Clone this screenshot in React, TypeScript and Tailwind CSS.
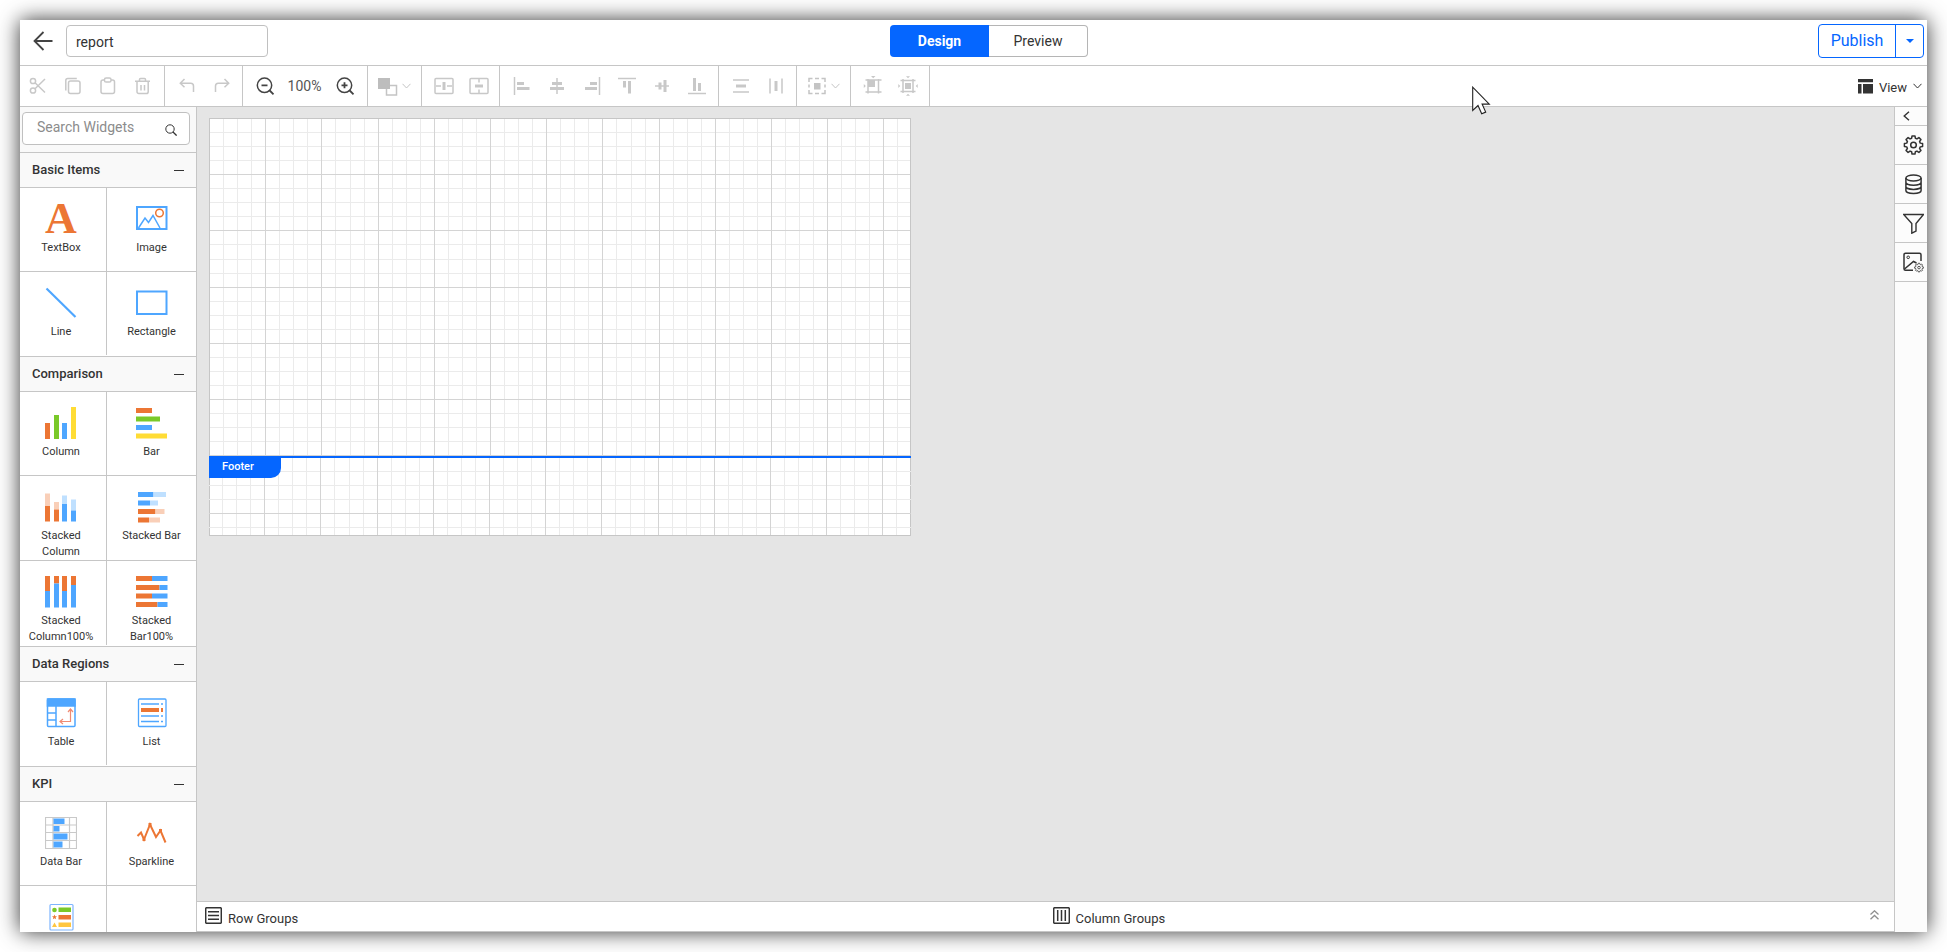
import type { ReactNode } from 'react';

const BLUE = '#4ea6ff';
const ORANGE = '#ec7634';
const GREEN = '#7ac929';
const YELLOW = '#ffdc35';
const PALE_BLUE = '#bfe0ff';
const PALE_ORANGE = '#f9cfb8';

/* [x, y, width, height, fill] */
type Block = [number, number, number, number, string];

function Blocks({ items }: { items: Block[] }) {
  return (
    <svg width="32" height="32" viewBox="0 0 32 32" aria-hidden="true">
      {items.map(([x, y, w, h, fill], i) => (
        <rect key={i} x={x} y={y} width={w} height={h} fill={fill} />
      ))}
    </svg>
  );
}

function Icon({ size = 20, color = 'currentColor', children }: { size?: number; color?: string; children: ReactNode }) {
  return (
    <svg width={size} height={size} viewBox={`0 0 ${size} ${size}`} fill="none" stroke={color} strokeWidth="1.5" className="shrink-0" aria-hidden="true">
      {children}
    </svg>
  );
}

const Chevron = () => (
  <svg width="9" height="6" viewBox="0 0 9 6" fill="none" stroke="currentColor" aria-hidden="true">
    <path d="M.5 .8 4.5 5 8.5 .8" />
  </svg>
);

/* ---------- toolbar icons ---------- */

const cut = (
  <Icon>
    <circle cx="5" cy="5" r="2.6" />
    <circle cx="5" cy="14.5" r="2.6" />
    <path d="M7 6.8 17 16.5M7 12.8 17 3" />
  </Icon>
);
const copy = (
  <Icon>
    <rect x="5.5" y="5" width="11.5" height="12.5" rx="2" />
    <path d="M2.8 14.5V4.5a2 2 0 0 1 2-2h9" />
  </Icon>
);
const paste = (
  <Icon>
    <rect x="3" y="4" width="13.5" height="13.5" rx="2" />
    <rect x="6.5" y="2" width="6.5" height="4" rx="1.6" fill="white" />
  </Icon>
);
const trash = (
  <Icon>
    <path d="M2 5.2h15M4 5.5v10.3a1.8 1.8 0 0 0 1.8 1.8h7.6a1.8 1.8 0 0 0 1.8-1.8V5.5M6.5 5V3.4a1 1 0 0 1 1-1h4a1 1 0 0 1 1 1V5M8 9v5.5M11.5 9v5.5" />
  </Icon>
);
const undo = (
  <Icon>
    <path d="M7.5 3 3.3 7.2l4.2 4M3.5 7.2h10.2a2.8 2.8 0 0 1 2.8 2.8v6" />
  </Icon>
);
const redo = (
  <Icon>
    <path d="M12.5 3l4.2 4.2-4.2 4M16.5 7.2H6.3a2.8 2.8 0 0 0-2.8 2.8v6" />
  </Icon>
);
const zoomOut = (
  <Icon>
    <circle cx="9.5" cy="9.3" r="7.2" />
    <path d="M14.7 14.5 18.5 18.3M6.5 9.3h6" strokeWidth="1.8" />
  </Icon>
);
const zoomIn = (
  <Icon>
    <circle cx="9.5" cy="9.3" r="7.2" />
    <path d="M14.7 14.5 18.5 18.3M6.5 9.3h6M9.5 6.3v6" strokeWidth="1.8" />
  </Icon>
);
const order = (
  <Icon>
    <rect x="8.5" y="9.5" width="10" height="9.5" />
    <rect x="0" y="2" width="12" height="11" fill="#bdbdbd" stroke="none" />
  </Icon>
);
const mergeH = (
  <Icon>
    <rect x="1" y="2.5" width="18" height="15" rx="1" />
    <path d="M2 10h5M13 10h5" />
    <path d="M10 6v8" strokeWidth="3" />
  </Icon>
);
const splitH = (
  <Icon>
    <rect x="1" y="2.5" width="18" height="15" rx="1" />
    <path d="M10 3v3.5M10 13.5V17" />
    <path d="M6 10h8" strokeWidth="3" />
  </Icon>
);
const alignIcons = [
  ['Align left', <><path d="M2.5 1v18" /><path d="M5 7.5h7M5 12.5h12.5" strokeWidth="3" /></>],
  ['Align center', <><path d="M10 2v16" /><path d="M5 7.5h10M3 12.5h14" strokeWidth="3" /></>],
  ['Align right', <><path d="M17.5 1v18" /><path d="M8 7.5h7M3 12.5h12" strokeWidth="3" /></>],
  ['Align top', <><path d="M1 2.5h18" /><path d="M7.5 5v6.5M12.5 5v12.5" strokeWidth="3" /></>],
  ['Align middle', <><path d="M3 10h14" /><path d="M8 6.5v7M13 4v12" strokeWidth="3" /></>],
  ['Align bottom', <><path d="M1 17.5h18" /><path d="M7.5 2v13M12.5 7v8" strokeWidth="3" /></>],
] as [string, ReactNode][];
const distributeV = (
  <Icon>
    <path d="M2 4h16M2 16h16" />
    <path d="M5 10h10" strokeWidth="3" />
  </Icon>
);
const distributeH = (
  <Icon>
    <path d="M4 2.5v15M16 2.5v15" />
    <path d="M10 5v10" strokeWidth="3" />
  </Icon>
);
const sizeIcon = (
  <Icon>
    <path d="M2 6V2.5h3.5M14.5 2.5H18V6M18 14v3.5h-3.5M5.5 17.5H2V14M8 2.5h4M8 17.5h4M2 8.5v3M18 8.5v3" />
    <rect x="7" y="7" width="6.5" height="6.5" fill="currentColor" stroke="none" />
  </Icon>
);
const groupIcon = (
  <Icon>
    <path d="M5 3v14.5M15.5 3v14.5M2.5 4h16M2.5 16h16" />
    <path d="M5 4h7v7H5zM8 0h4.5L10.2 2.2zM.8 8v4l2-2z" fill="currentColor" stroke="none" />
  </Icon>
);
const gridIcon = (
  <Icon>
    <path d="M5 3v14M15 3v14M2.5 4.5h15M2.5 15.5h15" />
    <path d="M7 7h6v6H7zM8 .3h4L10 2.2zM8 19.7h4l-2-1.9zM.3 8v4l1.9-2zM19.7 8v4l-1.9-2z" fill="currentColor" stroke="none" />
  </Icon>
);

function Tool({ label, dark, children }: { label: string; dark?: boolean; children: ReactNode }) {
  return (
    <button
      type="button"
      aria-label={label}
      className={dark ? 'flex h-full w-[35px] items-center justify-center text-[#444]' : 'flex h-full w-[35px] items-center justify-center text-[#c8c8c8]'}
    >
      {children}
    </button>
  );
}

function Group({ className = 'pl-1 pr-[3px]', children }: { className?: string; children: ReactNode }) {
  return <div className={`flex items-center border-r border-[#c6c6c6] ${className}`}>{children}</div>;
}

function Toolbar() {
  return (
    <div className="flex h-[41px] shrink-0 border-b border-[#c6c6c6]">
      <Group className="pr-1">
        <Tool label="Cut">{cut}</Tool>
        <Tool label="Copy">{copy}</Tool>
        <Tool label="Paste">{paste}</Tool>
        <Tool label="Delete">{trash}</Tool>
      </Group>
      <Group>
        <Tool label="Undo">{undo}</Tool>
        <Tool label="Redo">{redo}</Tool>
      </Group>
      <Group className="pl-1 pr-[5px]">
        <Tool label="Zoom out" dark>{zoomOut}</Tool>
        <span className="w-[45px] text-center text-sm text-[#555]">100%</span>
        <Tool label="Zoom in" dark>{zoomIn}</Tool>
      </Group>
      <Group className="w-[54px] justify-center">
        <button type="button" aria-label="Order" className="flex h-full items-center gap-1 text-[#c4c4c4]">
          {order}
          <Chevron />
        </button>
      </Group>
      <Group>
        <Tool label="Merge cells">{mergeH}</Tool>
        <Tool label="Split cells">{splitH}</Tool>
      </Group>
      <Group className="px-1">
        {alignIcons.map(([label, art]) => (
          <Tool key={label} label={label}>
            <Icon>{art}</Icon>
          </Tool>
        ))}
      </Group>
      <Group>
        <Tool label="Distribute vertically">{distributeV}</Tool>
        <Tool label="Distribute horizontally">{distributeH}</Tool>
      </Group>
      <Group className="w-[54px] justify-center">
        <button type="button" aria-label="Size" className="flex h-full items-center gap-1 text-[#c4c4c4]">
          {sizeIcon}
          <Chevron />
        </button>
      </Group>
      <Group className="px-1">
        <Tool label="Align to grid">{groupIcon}</Tool>
        <Tool label="Size to grid">{gridIcon}</Tool>
      </Group>
      <button type="button" className="ml-auto flex items-center gap-[6px] pr-[5px] text-[13px] text-[#333]">
        <svg width="15" height="15" viewBox="0 0 15 15" fill="#333" aria-hidden="true">
          <path d="M0 0h15v3.2H0zM0 5h3.5v9.5H0zM5 5h10v9.5H5z" />
        </svg>
        <span className="pt-1 leading-5">View</span>
        <Chevron />
      </button>
    </div>
  );
}

/* ---------- header ---------- */

function Header() {
  return (
    <header className="flex h-[46px] shrink-0 items-center border-b border-[#c6c6c6] pr-[3px]">
      <div className="flex flex-1 items-center gap-3 pl-3">
        <button type="button" aria-label="Back" className="pb-1 pl-px text-[#444]">
          <svg width="21" height="20" viewBox="0 0 21 20" fill="none" stroke="currentColor" strokeWidth="1.8" aria-hidden="true">
            <path d="M19.500 10H1.500M10.500 1 1.500 10l9 9" />
          </svg>
        </button>
        <input
          aria-label="Report name"
          defaultValue="report"
          className="mb-1 h-8 w-[202px] rounded border border-[#c0c0c0] px-[9px] pt-0.5 text-sm text-[#333] outline-none"
        />
      </div>
      <div className="mb-1 ml-[22px] flex h-8">
        <button type="button" className="w-[99px] rounded-l bg-[#0566ff] text-sm font-bold text-white">Design</button>
        <button type="button" className="w-[99px] rounded-r border border-l-0 border-[#b5b5b5] text-sm text-[#333]">Preview</button>
      </div>
      <div className="flex flex-1 justify-end">
        <div className="mb-1 flex h-[34px] rounded border border-[#0566ff] text-[#0566ff]">
          <button type="button" className="w-[76px] text-base">Publish</button>
          <button type="button" aria-label="Publish options" className="flex w-7 items-center justify-center border-l border-[#0566ff]">
            <svg width="8" height="4" viewBox="0 0 8 4" fill="currentColor" aria-hidden="true"><path d="M0 0h8L4 4z" /></svg>
          </button>
        </div>
      </div>
    </header>
  );
}

/* ---------- widget panel ---------- */

const textBoxArt = (
  <svg width="32" height="32" viewBox="0 0 32 32" className="overflow-visible" aria-hidden="true">
    <text x="16" y="30" textAnchor="middle" fill={ORANGE} fontSize="44" fontWeight="bold" fontFamily="'Liberation Serif', serif">A</text>
  </svg>
);
const imageArt = (
  <Icon size={32} color={BLUE}>
    <rect x="1" y="4" width="29.5" height="22" strokeWidth="2" />
    <path d="m2.500 25 6.500-10 3.500 4.500L17 12.500 24 25" />
    <circle cx="23.5" cy="10" r="3.8" stroke={ORANGE} />
  </Icon>
);
const lineArt = <Icon size={32} color={BLUE}><path d="M1.500 1.500 30.500 30" strokeWidth="2.2" /></Icon>;
const rectangleArt = <Icon size={32} color={BLUE}><rect x="1" y="4.5" width="29.5" height="22.5" strokeWidth="2" /></Icon>;
const tableArt = (
  <Icon size={32} color={BLUE}>
    <rect x="2.5" y="2" width="27.5" height="27.5" rx="1" />
    <path d="M2.500 2h27.500v7H2.500z" fill={BLUE} />
    <path d="M11 9v20M3 16h8M3 23h8" />
    <path d="M25.500 12v12.500H15.500M23 15l2.500-3 2.500 3M18 22l-3 2.500 3 2.500" stroke="#ef8b74" strokeWidth="1.2" />
  </Icon>
);
const listArt = (
  <Icon size={32} color={BLUE}>
    <rect x="2.5" y="2" width="27.5" height="27.5" rx="1" strokeWidth="1.3" />
    <path d="M5 7h18M5 19h18M5 24.500h18M25 7h2M25 19h2M25 24.500h2" />
    <path d="M5 13h18M25 13h2" stroke={ORANGE} strokeWidth="4" />
  </Icon>
);
const dataBarArt = (
  <Icon size={32} color="#c9c9c9">
    <path d="M.5.5h31v31H.5zM8 0v32M24.500 0v32M0 8h32M0 15.500h32M0 23.500h32" strokeWidth="1.2" />
    <path d="M8.500 1.500h11v5.500h-11zM8.500 9h6v5.500h-6zM8.500 16.500h14v6h-14zM8.500 24.500h9v6h-9z" fill={BLUE} stroke="none" />
  </Icon>
);
const sparklineArt = (
  <Icon size={32} color={ORANGE}>
    <path d="M1.500 19 5 15.500 8 22.500 14 7.500 20 20 24.500 13.500 29.500 25.500" strokeWidth="2" />
    <path d="M12.500 6h3v3h-3zM23 12h3v3h-3zM6.500 21.500h3v2.500h-3z" fill={ORANGE} stroke="none" />
  </Icon>
);
const indicatorArt = (
  <Icon size={32} color="#7db5ff">
    <rect x="5" y="3.5" width="23" height="25.5" rx="1" strokeWidth="1.2" />
    <circle cx="9.5" cy="9" r="2.3" fill={GREEN} stroke="none" />
    <path d="M13.500 6.500H26v4.500H13.500z" fill={GREEN} stroke="none" />
    <path d="m9.500 13.500 .7 1.700 1.800.1-1.400 1.200.5 1.800-1.600-1-1.600 1 .5-1.800L7 15.300l1.800-.1zM13.500 14H26v4.500H13.500z" fill={ORANGE} stroke="none" />
    <path d="M9.500 21.500 12 26H7zM13.500 21.500H26V26H13.500z" fill="#ffc640" stroke="none" />
  </Icon>
);

const columnBlocks: Block[] = [
  [0, 16, 5, 16, ORANGE], [9, 8, 5, 24, GREEN], [17, 16, 5, 16, BLUE], [26, 0, 5, 32, YELLOW],
];
const barBlocks: Block[] = [
  [0, 1, 16, 5, ORANGE], [0, 9.5, 24, 5, GREEN], [0, 18, 16, 5, BLUE], [0, 26.5, 31, 5, YELLOW],
];
const stackedColumnBlocks: Block[] = [
  [0, 2.5, 5, 12.5, PALE_ORANGE], [0, 15, 5, 15.5, ORANGE],
  [9, 11, 5, 7.5, PALE_ORANGE], [9, 18.5, 5, 12, ORANGE],
  [17, 4.5, 5, 8.5, PALE_BLUE], [17, 13, 5, 17.5, BLUE],
  [26, 8.5, 5, 11, PALE_BLUE], [26, 19.5, 5, 11, BLUE],
];
const stackedBarBlocks: Block[] = [
  [2, 1, 15.5, 5, BLUE], [17.5, 1, 12.5, 5, PALE_BLUE],
  [2, 9.5, 12, 5, BLUE], [14, 9.5, 8, 5, PALE_BLUE],
  [2, 18, 17.5, 5, ORANGE], [19.5, 18, 9, 5, PALE_ORANGE],
  [2, 26.5, 11, 5, ORANGE], [13, 26.5, 11, 5, PALE_ORANGE],
];
const fullColumnBlocks: Block[] = [
  [0, 0, 5, 15, ORANGE], [0, 15, 5, 16.5, BLUE],
  [9, 0, 5, 7.5, ORANGE], [9, 7.5, 5, 24, BLUE],
  [17, 0, 5, 15, ORANGE], [17, 15, 5, 16.5, BLUE],
  [26, 0, 5, 9, ORANGE], [26, 9, 5, 22.5, BLUE],
];
const fullBarBlocks: Block[] = [
  [0, 0, 16, 5, ORANGE], [16, 0, 15.5, 5, BLUE],
  [0, 9, 23.5, 5, ORANGE], [23.5, 9, 8, 5, BLUE],
  [0, 17.5, 16, 5, ORANGE], [16, 17.5, 15.5, 5, BLUE],
  [0, 26, 21.5, 5, ORANGE], [21.5, 26, 10, 5, BLUE],
];

type Widget = { name?: string; art: ReactNode };

const sections: { title: string; rows: Widget[][] }[] = [
  {
    title: 'Basic Items',
    rows: [
      [{ name: 'TextBox', art: textBoxArt }, { name: 'Image', art: imageArt }],
      [{ name: 'Line', art: lineArt }, { name: 'Rectangle', art: rectangleArt }],
    ],
  },
  {
    title: 'Comparison',
    rows: [
      [{ name: 'Column', art: <Blocks items={columnBlocks} /> }, { name: 'Bar', art: <Blocks items={barBlocks} /> }],
      [{ name: 'Stacked Column', art: <Blocks items={stackedColumnBlocks} /> }, { name: 'Stacked Bar', art: <Blocks items={stackedBarBlocks} /> }],
      [{ name: 'Stacked Column100%', art: <Blocks items={fullColumnBlocks} /> }, { name: 'Stacked Bar100%', art: <Blocks items={fullBarBlocks} /> }],
    ],
  },
  {
    title: 'Data Regions',
    rows: [[{ name: 'Table', art: tableArt }, { name: 'List', art: listArt }]],
  },
  {
    title: 'KPI',
    rows: [
      [{ name: 'Data Bar', art: dataBarArt }, { name: 'Sparkline', art: sparklineArt }],
      [{ art: indicatorArt }],
    ],
  },
];

function WidgetCell({ widget, left }: { widget?: Widget; left: boolean }) {
  return (
    <div className={left ? 'w-[87px] border-r border-[#c6c6c6] pr-1' : 'min-w-0 flex-1'}>
      {widget && (
        <button
          type="button"
          aria-label={widget.name ?? 'Indicator'}
          className="flex w-full flex-col items-center px-[3px] pt-[15px] text-[11px] leading-4 text-[#333]"
        >
          {widget.art}
          {widget.name && <span className="mt-[5px]">{widget.name}</span>}
        </button>
      )}
    </div>
  );
}

function WidgetPanel() {
  return (
    <aside className="flex w-[177px] shrink-0 flex-col overflow-hidden border-r border-[#c6c6c6] bg-white">
      <div className="h-[45px] shrink-0 bg-[#f9f9f9] pl-0.5 pt-[5px]">
        <div className="flex h-[33px] w-[168px] items-center rounded border border-[#c0c0c0] bg-white pl-[14px] pr-3">
          <input
            aria-label="Search widgets"
            placeholder="Search Widgets"
            className="min-w-0 flex-1 pb-1 text-sm text-[#333] outline-none placeholder:text-[#8c8c8c]"
          />
          <svg width="12" height="12" viewBox="0 0 12 12" fill="none" stroke="#333" className="mt-0.5" aria-hidden="true">
            <circle cx="5" cy="5" r="4.2" />
            <path d="m8 8 3.600 3.600" strokeWidth="1.3" />
          </svg>
        </div>
      </div>
      {sections.map((section) => (
        <section key={section.title} className="shrink-0">
          <h2>
            <button
              type="button"
              aria-expanded="true"
              className="flex h-9 w-full items-center justify-between border-y border-[#c6c6c6] bg-[#f9f9f9] pl-3 pr-3 text-[13px] font-medium text-[#333]"
            >
              {section.title}
              <span className="h-px w-[10px] bg-[#333]" />
            </button>
          </h2>
          {section.rows.map((row, i) => (
            <div
              key={i}
              className={i === section.rows.length - 1 ? 'flex min-h-[84px] pb-px' : 'flex min-h-[84px] border-b border-[#c6c6c6]'}
            >
              <WidgetCell widget={row[0]} left />
              <WidgetCell widget={row[1]} left={false} />
            </div>
          ))}
        </section>
      ))}
    </aside>
  );
}

/* ---------- design surface ---------- */

const MINOR_STEP = 14.05;
const MINOR_COUNT = 50;

function GridLines() {
  const marks = Array.from({ length: MINOR_COUNT }, (_, i) => i + 1);
  const minor = marks.filter((i) => i % 4 !== 0);
  const major = marks.filter((i) => i % 4 === 0);
  const path = (list: number[]) =>
    list
      .map((i) => {
        const p = Math.round(i * MINOR_STEP) - 0.5;
        return `M${p} 0V800M0 ${p}H800`;
      })
      .join('');
  return (
    <svg className="absolute inset-0 h-full w-full" fill="none" aria-hidden="true">
      <path d={path(minor)} stroke="#ebebeb" />
      <path d={path(major)} stroke="#d4d4d4" />
    </svg>
  );
}

function DesignSurface() {
  return (
    <main className="min-h-0 flex-1 overflow-hidden bg-[#e5e5e5] pl-3 pt-[11px]">
      <div className="w-[702px] border border-[#c6c6c6] bg-white">
        <section aria-label="Body" className="relative h-[337px]">
          <GridLines />
        </section>
        <section aria-label="Footer" className="relative -mx-px h-[79px] border-t-2 border-[#0566ff]">
          <GridLines />
          <span className="relative block h-5 w-[72px] rounded-br-[10px] bg-[#0566ff] pl-[13px] text-[11px] font-medium leading-[18px] text-white">
            Footer
          </span>
        </section>
      </div>
    </main>
  );
}

function GroupsBar() {
  return (
    <footer className="flex h-[31px] shrink-0 border-y border-[#c6c6c6] bg-white text-[13px] text-[#333]">
      <div className="flex flex-1 items-center gap-[6px] pl-2">
        <span className="mb-[3px]">
          <Icon size={17} color="#333">
            <rect x=".7" y=".7" width="15.6" height="15.6" rx="1" />
            <path d="M3 4.700h11M3 8.500h11M3 12.300h11" />
          </Icon>
        </span>
        <span className="pt-1">Row Groups</span>
      </div>
      <div className="flex flex-1 items-center gap-[6px] pl-[6px]">
        <span className="mb-[3px]">
          <Icon size={17} color="#333">
            <rect x=".7" y=".7" width="15.6" height="15.6" rx="1" />
            <path d="M4.700 3v11M8.500 3v11M12.300 3v11" />
          </Icon>
        </span>
        <span className="pt-1">Column Groups</span>
        <button type="button" aria-label="Expand groups" className="mb-1 ml-auto mr-[15px] text-[#8f8f8f]">
          <svg width="9" height="10" viewBox="0 0 9 10" fill="none" stroke="currentColor" strokeWidth="1.3" aria-hidden="true">
            <path d="M.5 4.500l4-3.700 4 3.700M.5 9.200l4-3.700 4 3.700" />
          </svg>
        </button>
      </div>
    </footer>
  );
}

/* ---------- right rail ---------- */

function gearPath(cx: number, cy: number, outer: number, inner: number) {
  const teeth = 8;
  const pts: string[] = [];
  for (let i = 0; i < teeth; i++) {
    const base = (i * 2 * Math.PI) / teeth - Math.PI / 2;
    ([[-0.27, inner], [-0.16, outer], [0.16, outer], [0.27, inner]] as const).forEach(([d, r]) => {
      pts.push(`${(cx + r * Math.cos(base + d)).toFixed(2)} ${(cy + r * Math.sin(base + d)).toFixed(2)}`);
    });
  }
  return `M${pts.join('L')}Z`;
}

const railItems: { label: string; art: ReactNode }[] = [
  {
    label: 'Properties',
    art: (
      <>
        <path d={gearPath(10.5, 10, 9.2, 7)} strokeLinejoin="round" />
        <circle cx="10.5" cy="10" r="2.8" />
      </>
    ),
  },
  {
    label: 'Data',
    art: (
      <>
        <ellipse cx="10.5" cy="4" rx="7.6" ry="3" />
        <path d="M2.900 4v12.500c0 1.700 3.400 3 7.600 3s7.600-1.300 7.600-3V4M2.900 8.200c0 1.700 3.400 3 7.600 3s7.600-1.300 7.600-3M2.900 12.400c0 1.700 3.400 3 7.600 3s7.600-1.300 7.600-3" />
      </>
    ),
  },
  {
    label: 'Parameters',
    art: <path d="M.7 1.500h19.800L13 10.500V18l-4.200 2.200v-9.700z" strokeWidth="1.4" />,
  },
  {
    label: 'Image manager',
    art: (
      <>
        <path d="M10 18.300H2.500a1.500 1.500 0 0 1-1.500-1.500V2.700a1.500 1.500 0 0 1 1.500-1.500h14a1.500 1.500 0 0 1 1.500 1.500V9" />
        <path d="M1.500 17 10.500 9.500l3 1.500" />
        <circle cx="5.2" cy="5.3" r="1.3" strokeWidth="1" />
        <path d={gearPath(16, 15.6, 4.4, 3.4)} strokeWidth=".8" />
        <circle cx="16" cy="15.6" r="1.3" strokeWidth=".8" />
      </>
    ),
  },
];

function Rail() {
  return (
    <nav aria-label="Panels" className="flex w-[33px] shrink-0 flex-col border-l border-[#c6c6c6] bg-[#fcfcfc] text-[#333]">
      <button type="button" aria-label="Expand panel" className="flex h-[19px] items-center border-b border-[#c6c6c6] pl-2">
        <svg width="7" height="10" viewBox="0 0 7 10" fill="none" stroke="currentColor" strokeWidth="1.4" aria-hidden="true">
          <path d="M6 .8 1.200 5 6 9.200" />
        </svg>
      </button>
      {railItems.map((item) => (
        <button key={item.label} type="button" aria-label={item.label} className="flex h-[39px] items-center border-b border-[#c6c6c6] pl-2">
          <Icon size={21}>{item.art}</Icon>
        </button>
      ))}
    </nav>
  );
}

export default function App() {
  return (
    <div className="relative flex h-screen flex-col bg-white p-5 font-['Roboto',sans-serif]">
      <div className="flex min-h-0 flex-1 flex-col bg-white shadow-[0_0_20px_rgba(0,0,0,0.8)]">
        <Header />
        <Toolbar />
        <div className="flex min-h-0 flex-1">
          <WidgetPanel />
          <div className="flex min-w-0 flex-1 flex-col">
            <DesignSurface />
            <GroupsBar />
          </div>
          <Rail />
        </div>
      </div>
      <svg className="absolute left-[1472px] top-[86px]" width="19" height="29" viewBox="0 0 19 29" aria-hidden="true">
        <path d="M.7 1.200v23.300l5.300-5 3.700 8.300 4-1.700-3.600-8h7.200z" fill="white" stroke="#222" strokeWidth="1.1" />
      </svg>
    </div>
  );
}
